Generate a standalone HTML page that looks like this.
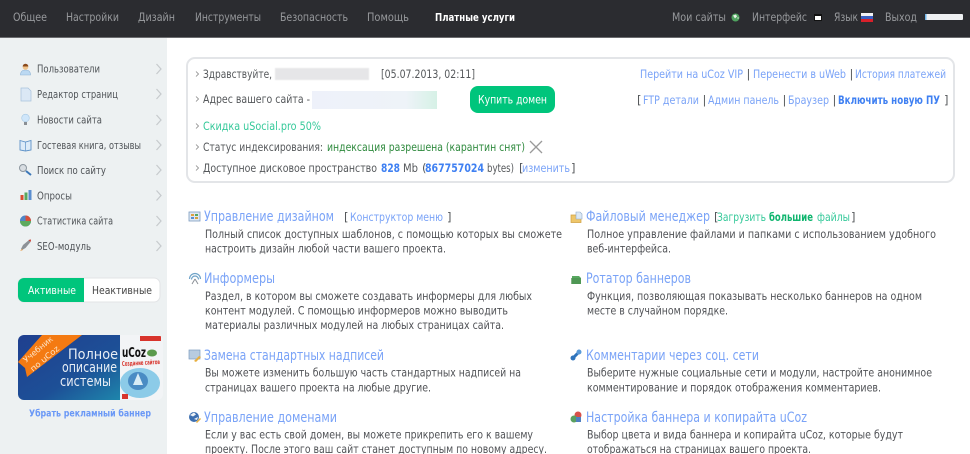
<!DOCTYPE html>
<html lang="ru"><head><meta charset="utf-8"><title>Панель управления</title>
<style>
html,body{margin:0;padding:0;background:#fff;width:970px;height:454px;overflow:hidden}
svg{display:block;position:absolute;left:0;top:0;filter:blur(.3px)}
text{font-family:"DejaVu Sans","Liberation Sans",sans-serif;font-size:11.5px;fill:#555}
.n{fill:#97999c;font-size:11.5px}
.s{fill:#505458;font-size:10.5px}
.d{fill:#505256;font-size:11.5px}
.b{fill:#55585b;font-size:11.5px}
.l{fill:#7aa3f7;font-size:11.5px}
.t{fill:#7aa3f7;font-size:14.5px}
.k{fill:#3f80f2;font-size:11.5px;font-weight:bold}
</style></head><body>
<svg width="970" height="454" viewBox="0 0 970 454" xmlns="http://www.w3.org/2000/svg">
<defs>
<linearGradient id="g1" x1="0" x2="1"><stop offset="0" stop-color="#eef1fa"/><stop offset=".75" stop-color="#eef3f8"/><stop offset="1" stop-color="#d6f1e6"/></linearGradient>
<linearGradient id="g2" x1="0" x2="1" y1="0" y2="1"><stop offset="0" stop-color="#1f3f8f"/><stop offset=".6" stop-color="#1d5097"/><stop offset="1" stop-color="#1e86ac"/></linearGradient>
<clipPath id="bc"><rect x="18" y="335" width="145" height="65" rx="6"/></clipPath>
<filter id="soft"><feGaussianBlur stdDeviation="0.6"/></filter>
</defs>

<rect x="0" y="0" width="970" height="37" fill="#2b2c30"/>
<rect x="0" y="37" width="970" height="1" fill="#6a6b6e"/>
<rect x="0" y="38" width="167" height="416" fill="#edf1f2"/>

<rect x="187" y="58" width="767" height="124" rx="8" fill="#fff" stroke="#e3e5e8" stroke-width="2"/>
<rect x="275" y="68" width="94" height="12" fill="#e6e6e8" filter="url(#soft)"/>
<rect x="312" y="91" width="125" height="18" fill="url(#g1)"/>
<rect x="470" y="86" width="85" height="27" rx="8" fill="#00c57c"/>
<path d="M530 141l12 12M542 141l-12 12" stroke="#9a9a9a" stroke-width="1.3" fill="none"/>

<rect x="18" y="278" width="142" height="24" rx="6" fill="#fff" stroke="#e2e4e6"/>
<path d="M24 278h60v24h-60a6 6 0 0 1-6-6v-12a6 6 0 0 1 6-6z" fill="#00c57c"/>

<!-- Banner -->
<g clip-path="url(#bc)">
<rect x="18" y="335" width="102" height="65" fill="url(#g2)"/>
<rect x="120" y="335" width="43" height="65" fill="#f2f4f6"/>
<path d="M42 335H82L27 377L25 368L18 362z" fill="#f47a12"/>
<ellipse cx="140" cy="383" rx="20" ry="15" fill="#8ccbe8"/>
<ellipse cx="138" cy="381" rx="10" ry="9" fill="#4a8cc4"/>
<path d="M138 373l-5 12h10z" fill="#d8ecf6"/>
<rect x="122" y="394" width="6" height="5" fill="#d8342c"/>
<rect x="140" y="336" width="21" height="5" fill="#d8342c"/>
<ellipse cx="152" cy="353" rx="5" ry="3.500" fill="#5a9a4c"/>
<text x="122" y="357" textLength="24" lengthAdjust="spacingAndGlyphs" style="font-size:13px;font-weight:bold;fill:#111">uCoz</text>
<text x="122" y="366" transform="rotate(-3 122 366)" textLength="38" lengthAdjust="spacingAndGlyphs" style="font-size:6.5px;font-weight:bold;fill:#d8342c">Создание сайтов</text>
<text x="68" y="359" textLength="50" lengthAdjust="spacingAndGlyphs" style="font-size:14px;fill:#e8eef5">Полное</text>
<text x="62" y="372" textLength="55" lengthAdjust="spacingAndGlyphs" style="font-size:14px;fill:#e8eef5">описание</text>
<text x="60" y="386" textLength="51" lengthAdjust="spacingAndGlyphs" style="font-size:14px;fill:#e8eef5">системы</text>
<text x="26" y="363" transform="rotate(-40 26 363)" textLength="36" lengthAdjust="spacingAndGlyphs" style="font-size:8px;fill:#fde4c8">Учебник</text>
<text x="33" y="372" transform="rotate(-40 33 372)" textLength="35" lengthAdjust="spacingAndGlyphs" style="font-size:8px;fill:#fde4c8">по uCoz</text>
</g>

<!-- Header text -->
<g>
<text class="n" x="13" y="21" textLength="34" lengthAdjust="spacingAndGlyphs">Общее</text>
<text class="n" x="66" y="21" textLength="53" lengthAdjust="spacingAndGlyphs">Настройки</text>
<text class="n" x="138" y="21" textLength="37" lengthAdjust="spacingAndGlyphs">Дизайн</text>
<text class="n" x="195" y="21" textLength="66" lengthAdjust="spacingAndGlyphs">Инструменты</text>
<text class="n" x="280" y="21" textLength="68" lengthAdjust="spacingAndGlyphs">Безопасность</text>
<text class="n" x="367" y="21" textLength="42" lengthAdjust="spacingAndGlyphs">Помощь</text>
<text x="435" y="21" textLength="80" lengthAdjust="spacingAndGlyphs" style="fill:#fff;font-weight:bold;font-size:10.5px">Платные услуги</text>
<text class="n" x="672" y="21" textLength="54" lengthAdjust="spacingAndGlyphs">Мои сайты</text>
<text class="n" x="752" y="21" textLength="55" lengthAdjust="spacingAndGlyphs">Интерфейс</text>
<text class="n" x="834" y="21" textLength="24" lengthAdjust="spacingAndGlyphs">Язык</text>
<text class="n" x="885" y="21" textLength="32" lengthAdjust="spacingAndGlyphs">Выход</text>
</g>
<circle cx="735.500" cy="17.500" r="4" fill="#4fa35f"/><path d="M733 15.500l3-1 1 2-2 2zM737 18l1.500-1 0 2z" fill="#e6f2e6"/>
<rect x="814" y="14" width="8" height="7" fill="#111"/><rect x="815" y="16" width="6" height="4" fill="#fff"/>
<rect x="861" y="13" width="12" height="3" fill="#f2f2f4"/><rect x="861" y="16" width="12" height="3" fill="#3a5fc0"/><rect x="861" y="19" width="12" height="3" fill="#d8202a"/>
<rect x="925" y="14" width="38" height="6" rx="1" fill="#eef0f2"/><rect x="925" y="14" width="1.500" height="6" fill="#6fb4e8"/>

<!-- Sidebar -->
<g>
<text class="s" x="37" y="72.500" textLength="63" lengthAdjust="spacingAndGlyphs">Пользователи</text>
<text class="s" x="37" y="98" textLength="81" lengthAdjust="spacingAndGlyphs">Редактор страниц</text>
<text class="s" x="37" y="123.500" textLength="65" lengthAdjust="spacingAndGlyphs">Новости сайта</text>
<text class="s" x="37" y="149" textLength="104" lengthAdjust="spacingAndGlyphs">Гостевая книга, отзывы</text>
<text class="s" x="37" y="174" textLength="69" lengthAdjust="spacingAndGlyphs">Поиск по сайту</text>
<text class="s" x="37" y="199.500" textLength="35" lengthAdjust="spacingAndGlyphs">Опросы</text>
<text class="s" x="37" y="224.500" textLength="76" lengthAdjust="spacingAndGlyphs">Статистика сайта</text>
<text class="s" x="37" y="250" textLength="54" lengthAdjust="spacingAndGlyphs">SEO-модуль</text>
</g>
<path d="M156.500 64l4.500 5-4.500 5M156.500 89l4.500 5-4.500 5M156.500 115l4.500 5-4.500 5M156.500 140l4.500 5-4.500 5M156.500 165l4.500 5-4.500 5M156.500 190.500l4.500 5-4.500 5M156.500 216l4.500 5-4.500 5M156.500 241l4.500 5-4.500 5" fill="none" stroke="#c6cacd" stroke-width="1.200"/>

<!-- Sidebar icons -->
<path d="M20.500 75c0-4 2.500-5 5-5s5 1 5 5z" fill="#bcd9f2" stroke="#8fb4d6" stroke-width=".6"/><circle cx="25.500" cy="67" r="2.800" fill="#f0c48c"/><path d="M22.700 66.500a2.800 2.800 0 0 1 5.600 0z" fill="#8a4a1c"/>
<path d="M21 88h7l3 3v10h-10z" fill="#dbe8f5" stroke="#a8c2dc" stroke-width=".7"/>
<circle cx="25.500" cy="118" r="3.800" fill="#cfe6fa" stroke="#a6c8e4" stroke-width=".6"/><rect x="24" y="122" width="3" height="3" fill="#8a8f94"/>
<path d="M20 140.500l5.500 1.500 5.500-1.500v9.500l-5.500 1-5.500-1z" fill="#dcebf8" stroke="#5f93c8" stroke-width=".9"/><path d="M25.500 142v9" stroke="#5f93c8" stroke-width=".7"/>
<circle cx="23" cy="168" r="3.500" fill="#d8dde2" stroke="#8d979f" stroke-width="1"/><path d="M26 171l5 4" stroke="#3d78b8" stroke-width="2"/>
<rect x="20.500" y="195" width="3" height="5" fill="#d84c32"/><rect x="24.500" y="192.500" width="3" height="7.500" fill="#58a860"/><rect x="28.500" y="190" width="3" height="10" fill="#5a8ed0"/>
<circle cx="25.500" cy="221" r="5.500" fill="#5a8ed0"/><path d="M25.500 221v-5.500a5.500 5.500 0 0 1 5.500 5.500z" fill="#d8503a"/><path d="M20 221a5.500 5.500 0 0 0 11 0z" fill="#5eaa5e"/><path d="M25.500 221v-5.500a5.500 5.500 0 0 0-5.500 5.500z" fill="#4f86c8"/>
<path d="M21 249l2-4 6-5 2-.5-.5 2.500-5 6-3.500 2z" fill="#8d9297"/><path d="M28.500 240l2.500-.5-.5 2.500z" fill="#d83a2c"/><path d="M20 251l2-2 1 1z" fill="#e8963c"/>

<text x="28" y="294" textLength="48" lengthAdjust="spacingAndGlyphs" style="fill:#fff;font-size:11px">Активные</text>
<text x="92" y="294" textLength="60" lengthAdjust="spacingAndGlyphs" style="fill:#444;font-size:11px">Неактивные</text>
<text x="29" y="416.500" textLength="122" lengthAdjust="spacingAndGlyphs" style="fill:#6a98f6;font-weight:bold;font-size:9.5px">Убрать рекламный баннер</text>

<!-- Box left -->
<path d="M196 71.500l2.500 2.500-2.500 2.500M196 96.500l2.500 2.500-2.500 2.500M196 123.500l2.500 2.500-2.500 2.500M196 144.500l2.500 2.500-2.500 2.500M196 165.500l2.500 2.500-2.500 2.500" fill="none" stroke="#888" stroke-width=".8"/>
<text class="b" x="203" y="78" textLength="69" lengthAdjust="spacingAndGlyphs">Здравствуйте,</text>
<text class="b" x="381" y="78" textLength="94" lengthAdjust="spacingAndGlyphs">[05.07.2013, 02:11]</text>
<text class="b" x="203" y="103" textLength="107" lengthAdjust="spacingAndGlyphs">Адрес вашего сайта -</text>
<text x="478" y="103.500" textLength="69" lengthAdjust="spacingAndGlyphs" style="fill:#fff">Купить домен</text>
<text x="203" y="130" textLength="118" lengthAdjust="spacingAndGlyphs" style="fill:#35c99a">Скидка uSocial.pro 50%</text>
<text class="b" x="203" y="151" textLength="120" lengthAdjust="spacingAndGlyphs">Статус индексирования:</text>
<text x="327" y="151" textLength="198" lengthAdjust="spacingAndGlyphs" style="fill:#2f8a3e">индексация разрешена (карантин снят)</text>
<text class="b" x="203" y="172" textLength="174" lengthAdjust="spacingAndGlyphs">Доступное дисковое пространство</text>
<text class="k" x="381" y="172" textLength="19" lengthAdjust="spacingAndGlyphs">828</text>
<text class="b" x="403" y="172" textLength="15" lengthAdjust="spacingAndGlyphs">Mb</text>
<text class="b" x="422" y="172">(</text>
<text class="k" x="425" y="172" textLength="59" lengthAdjust="spacingAndGlyphs">867757024</text>
<text class="b" x="487" y="172" textLength="27" lengthAdjust="spacingAndGlyphs">bytes)</text>
<text class="b" x="519" y="172">[</text>
<text class="l" x="522" y="172" textLength="48" lengthAdjust="spacingAndGlyphs">изменить</text>
<text class="b" x="571" y="172">]</text>

<!-- Box right -->
<text class="l" x="640" y="78" textLength="103" lengthAdjust="spacingAndGlyphs">Перейти на uCoz VIP</text>
<text class="b" x="746.500" y="78">|</text>
<text class="l" x="753" y="78" textLength="93" lengthAdjust="spacingAndGlyphs">Перенести в uWeb</text>
<text class="b" x="849.500" y="78">|</text>
<text class="l" x="855" y="78" textLength="91" lengthAdjust="spacingAndGlyphs">История платежей</text>
<text class="b" x="637" y="104">[</text>
<text class="l" x="643" y="104" textLength="56" lengthAdjust="spacingAndGlyphs">FTP детали</text>
<text class="b" x="702.500" y="104">|</text>
<text class="l" x="708" y="104" textLength="71" lengthAdjust="spacingAndGlyphs">Админ панель</text>
<text class="b" x="782.500" y="104">|</text>
<text class="l" x="788" y="104" textLength="41" lengthAdjust="spacingAndGlyphs">Браузер</text>
<text class="b" x="832.500" y="104">|</text>
<text class="k" x="838" y="104" textLength="102" lengthAdjust="spacingAndGlyphs">Включить новую ПУ</text>
<text class="b" x="944" y="104">]</text>

<!-- Left column -->
<text class="t" x="204" y="221" textLength="130" lengthAdjust="spacingAndGlyphs">Управление дизайном</text>
<text class="b" x="344" y="221">[</text>
<text class="l" x="350" y="221" textLength="93" lengthAdjust="spacingAndGlyphs">Конструктор меню</text>
<text class="b" x="447" y="221">]</text>
<text class="d" x="205" y="238" textLength="357" lengthAdjust="spacingAndGlyphs">Полный список доступных шаблонов, с помощью которых вы сможете</text>
<text class="d" x="205" y="252.500" textLength="241" lengthAdjust="spacingAndGlyphs">настроить дизайн любой части вашего проекта.</text>
<text class="t" x="204" y="283" textLength="71" lengthAdjust="spacingAndGlyphs">Информеры</text>
<text class="d" x="205" y="300" textLength="327" lengthAdjust="spacingAndGlyphs">Раздел, в котором вы сможете создавать информеры для любых</text>
<text class="d" x="205" y="314.500" textLength="303" lengthAdjust="spacingAndGlyphs">контент модулей. С помощью информеров можно выводить</text>
<text class="d" x="205" y="329" textLength="299" lengthAdjust="spacingAndGlyphs">материалы различных модулей на любых страницах сайта.</text>
<text class="t" x="204" y="360" textLength="180" lengthAdjust="spacingAndGlyphs">Замена стандартных надписей</text>
<text class="d" x="205" y="376.500" textLength="316" lengthAdjust="spacingAndGlyphs">Вы можете изменить большую часть стандартных надписей на</text>
<text class="d" x="205" y="391.500" textLength="226" lengthAdjust="spacingAndGlyphs">страницах вашего проекта на любые другие.</text>
<text class="t" x="204" y="422" textLength="133" lengthAdjust="spacingAndGlyphs">Управление доменами</text>
<text class="d" x="205" y="438.500" textLength="328" lengthAdjust="spacingAndGlyphs">Если у вас есть свой домен, вы можете прикрепить его к вашему</text>
<text class="d" x="205" y="453" textLength="342" lengthAdjust="spacingAndGlyphs">проекту. После этого ваш сайт станет доступным по новому адресу.</text>

<!-- Right column -->
<text class="t" x="586" y="221" textLength="124" lengthAdjust="spacingAndGlyphs">Файловый менеджер</text>
<text class="b" x="714" y="221">[</text>
<text x="717" y="221" textLength="49" lengthAdjust="spacingAndGlyphs" style="fill:#35c99a">Загрузить</text>
<text x="769" y="221" textLength="44" lengthAdjust="spacingAndGlyphs" style="fill:#0fb56e;font-weight:bold">большие</text>
<text x="817" y="221" textLength="33" lengthAdjust="spacingAndGlyphs" style="fill:#35c99a">файлы</text>
<text class="b" x="851" y="221">]</text>
<text class="d" x="587" y="238" textLength="349" lengthAdjust="spacingAndGlyphs">Полное управление файлами и папками с использованием удобного</text>
<text class="d" x="587" y="252.500" textLength="84" lengthAdjust="spacingAndGlyphs">веб-интерфейса.</text>
<text class="t" x="586" y="283" textLength="105" lengthAdjust="spacingAndGlyphs">Ротатор баннеров</text>
<text class="d" x="587" y="300" textLength="335" lengthAdjust="spacingAndGlyphs">Функция, позволяющая показывать несколько баннеров на одном</text>
<text class="d" x="587" y="314.500" textLength="141" lengthAdjust="spacingAndGlyphs">месте в случайном порядке.</text>
<text class="t" x="586" y="360" textLength="173" lengthAdjust="spacingAndGlyphs">Комментарии через соц. сети</text>
<text class="d" x="587" y="376.500" textLength="345" lengthAdjust="spacingAndGlyphs">Выберите нужные социальные сети и модули, настройте анонимное</text>
<text class="d" x="587" y="391.500" textLength="294" lengthAdjust="spacingAndGlyphs">комментирование и порядок отображения комментариев.</text>
<text class="t" x="586" y="422" textLength="221" lengthAdjust="spacingAndGlyphs">Настройка баннера и копирайта uCoz</text>
<text class="d" x="587" y="438.500" textLength="316" lengthAdjust="spacingAndGlyphs">Выбор цвета и вида баннера и копирайта uCoz, которые будут</text>
<text class="d" x="587" y="453" textLength="224" lengthAdjust="spacingAndGlyphs">отображаться на страницах вашего проекта.</text>

<!-- Content icons -->
<rect x="189" y="212" width="11" height="9" fill="#dfe8f2" stroke="#7d9cc0" stroke-width=".8"/><rect x="191" y="214" width="3" height="2" fill="#e0a040"/><rect x="195" y="214" width="3" height="2" fill="#58a860"/><rect x="191" y="217" width="3" height="2" fill="#5a8ed0"/><rect x="195" y="217" width="3" height="2" fill="#d8a040"/>
<path d="M189.500 279a5.500 5.500 0 0 1 11 0M191.500 279.500a3.500 3.500 0 0 1 7 0" fill="none" stroke="#6fa3c8" stroke-width="1.200"/><path d="M195 279l-3 5M195 279l3 5" stroke="#8a9096" stroke-width="1"/>
<rect x="189" y="350" width="11" height="9" fill="#b8cce0" stroke="#7d9cc0" stroke-width=".7"/><path d="M194 361l5-5 2 1-5 5z" fill="#e8b040"/>
<circle cx="194" cy="417" r="5" fill="#3d6fb0"/><path d="M190 415l4-2.500 2 2-3 2zM194 419l4-2-1 3z" fill="#eef2f6"/><path d="M196 422l4-4 1 1-4 4z" fill="#e8b040"/>
<path d="M571 215h5l1 1.500h4v6h-10z" fill="#eec66a" stroke="#cfa040" stroke-width=".7"/><path d="M576 212h4l2 2v5h-6z" fill="#dbe8f5" stroke="#8fa9c8" stroke-width=".6"/>
<path d="M572 276h7l2 2v6h-9z" fill="#58a860"/><path d="M571 278h10v6h-10z" fill="#4c9050" opacity=".7"/>
<path d="M573 358l4-4" stroke="#2f74bc" stroke-width="3" stroke-linecap="round"/><circle cx="579" cy="352" r="2.500" fill="#5a9ad8"/><circle cx="573" cy="358" r="2.500" fill="#2f74bc"/>
<circle cx="578" cy="415" r="3.500" fill="#d8504a"/><circle cx="574" cy="419" r="3.500" fill="#5aa060"/><rect x="576" y="417" width="5" height="5" fill="#4f7fc0"/>
</svg>
</body></html>
